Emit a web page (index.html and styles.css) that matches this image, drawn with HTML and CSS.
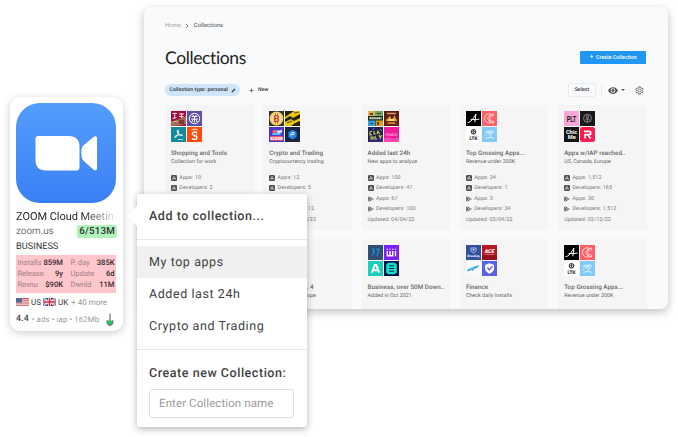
FILE: index.html
```html
<!DOCTYPE html>
<html lang="en">
<head>
<meta charset="utf-8">
<title>Collections</title>
<link rel="stylesheet" href="styles.css">
</head>
<body>
<svg class="defs" width="0" height="0">
  <defs>
    <linearGradient id="zg" x1="0" y1="0" x2="0" y2="1"><stop offset="0" stop-color="#549dfb"/><stop offset="1" stop-color="#3b7ff6"/></linearGradient>
    <linearGradient id="rg" x1="0" y1="0" x2="1" y2="1"><stop offset="0" stop-color="#ff1744"/><stop offset="1" stop-color="#f5245f"/></linearGradient>
    <symbol id="ios" viewBox="0 0 12 12"><rect width="12" height="12" rx="2.5" fill="#505052"/><path d="M6 2.6 3.2 8.9M6 2.6l2.8 6.3M2.2 7.5h7.6" stroke="#f5f5f5" stroke-width="1.1" fill="none"/></symbol>
    <symbol id="play" viewBox="0 0 12 12"><path d="M.5.5 5 6 .5 11.5z" fill="#555"/><path d="M1.800.6 8 4.200 6.200 5.800zM1.800 11.400 8 7.800 6.200 6.200z" fill="#444"/><path d="M8.900 4.500 11.800 6 8.900 7.500 7.400 6z" fill="#555"/></symbol>
    <symbol id="t-redshop" viewBox="0 0 15 15"><rect width="15" height="15" fill="#a50b3e"/><path d="M0 10.5 8 8l7-3v8l-9 2H0z" fill="#a46a55"/><path d="M1.500 2.500h4.500M3.700 1.500v6M1.500 7.500l4-1M8 3h5M8 5.500h4.500M10.500 2v5" stroke="#f3dce0" stroke-width="1"/><path d="M8 9h5v4H8z" fill="#7b3b31"/><path d="M1 12c2-2 4-2 6-1" stroke="#dcb295" fill="none"/></symbol>
    <symbol id="t-purple" viewBox="0 0 15 15"><rect width="15" height="15" fill="#5d51a5"/><circle cx="7.5" cy="7.5" r="5.2" fill="none" stroke="#fff"/><path d="M4.500 5.500h6M4 8h7M6 3.500v2M9 3.500v2M7.500 5.500v6M5 11l1-3M10 11 9 8" stroke="#fff" stroke-width=".9" fill="none"/></symbol>
    <symbol id="t-teal" viewBox="0 0 15 15"><rect width="15" height="15" fill="#138b9c"/><path d="M6.6 3.2c1.5-1 1.2 2.2.1 4.3-1.3 2.6-3.2 3.8-3 2.4.2-1.5 6.3-2.9 7.6-1.9.8 1-2.4 1-4.4-2-1-1.5-.8-2.5-.3-2.8z" fill="none" stroke="#fff" stroke-width="1"/><path d="M7 12.5h5" stroke="#b9e2e5" stroke-width=".9"/></symbol>
    <symbol id="t-orange" viewBox="0 0 15 15"><rect width="15" height="15" fill="#ff4b08"/><path d="M4.5 2.5h6" stroke="#ffc9b0" stroke-width="1.4"/><path d="M10 6C9 4.600 5.300 4.800 5.300 6.800c0 2 4.700 1.300 4.700 3.500 0 2.600-4 2.600-5 1" fill="none" stroke="#fff" stroke-width="1.500"/><path d="M10 7.200 7 9.800" stroke="#fff"/></symbol>
    <symbol id="t-btc" viewBox="0 0 15 15"><rect width="15" height="15" fill="#34332b"/><circle cx="7.5" cy="7.5" r="6.9" fill="#efcf72"/><circle cx="7.5" cy="7.5" r="5" fill="#f5df99"/><text x="7.6" y="10.9" text-anchor="middle" font-size="9.5" font-weight="700" fill="#d1342b">B</text><path d="M6.500 2.500v2M8.500 2.500v2M6.500 10.500v2M8.500 10.500v2" stroke="#d1342b" stroke-width=".8"/></symbol>
    <symbol id="t-yellow" viewBox="0 0 15 15"><rect width="15" height="15" fill="#e9c813"/><path d="M0 0h9L0 6zM0 8l5-3 3 2 7-4v4l-6 3-3-2-6 3zM6 15l4-3 5-2v5z" fill="#24230f"/><path d="M2 12l5-2M9 2l5-1" stroke="#5b5111"/></symbol>
    <symbol id="t-game" viewBox="0 0 15 15"><rect width="15" height="15" fill="#4d36cd"/><circle cx="5.5" cy="5" r="2.2" fill="#ff5b55"/><path d="M7 3.5h4l2-1v3l-4 1z" fill="#d9e5ff"/><path d="M3 8h9l-1-2H4z" fill="#4fc5ff"/><path d="M1.500 9h12v4.700h-12z" fill="#ed5368"/><text x="7.5" y="12.9" text-anchor="middle" font-size="4.2" font-weight="900" fill="#fff">SCENE</text></symbol>
    <symbol id="t-hex" viewBox="0 0 15 15"><rect width="15" height="15" fill="#182441"/><path d="M7.500 2.700 11.700 5v5l-4.200 2.400L3.300 10V5z" fill="#2385e9"/><path d="M6 9.500V6l3-.5v2H6.500" stroke="#fff" stroke-width=".8" fill="none"/></symbol>
    <symbol id="t-four" viewBox="0 0 15 15"><rect width="15" height="15" fill="#3e6b36"/><path d="M0 0h7v6H0z" fill="#dfb05a"/><path d="M7 0h8v5H7z" fill="#69aa5f"/><path d="M0 9h7v6H0z" fill="#2e9ee1"/><path d="M8 9h7v6H8z" fill="#df9a22"/><path d="M2 2h3v2H2zM9 2h4v1H9zM9 11h2v3H9zM2 12h3v1H2z" fill="#5d3722"/><path d="M0 5h15v4.600H0z" fill="#17301f"/><path d="M1.500 7.300h12" stroke="#e9efcf" stroke-width="2.100" stroke-dasharray="1.500 .4"/></symbol>
    <symbol id="t-fire" viewBox="0 0 15 15"><rect width="15" height="15" fill="#5b1d16"/><path d="M3 2.500h9" stroke="#d7a169" stroke-width="1.500"/><path d="M2 10c0-3 3-2 3-5 3 1 1 3 3 3s1-3 3-4c-1 3 2 3 2 6z" fill="#f4a02e"/><path d="M5 8h5v2H5z" fill="#ffe78f"/><path d="M2 10.500h11v3H2z" fill="#84361a"/><path d="M4 12h7" stroke="#f3c45f"/></symbol>
    <symbol id="t-clash" viewBox="0 0 15 15"><rect width="15" height="15" fill="#272053"/><path d="M0 15 6 9l9 2v4z" fill="#34267d"/><path d="M4 4 2 5v3l2-.3M6 4v3h2M9 7l1-3 1.500 3M3 10h2v2H3zM7 9v3h2M11 8l1.500 3 1-3" stroke="#b9cf40" stroke-width="1.200" fill="none"/><path d="M12 2l2 2M5 3l1-2" stroke="#27a5d9"/></symbol>
    <symbol id="t-pink" viewBox="0 0 15 15"><rect width="15" height="15" fill="#ee1b9d"/><path d="M0 12c5-4 9 2 15-2v5H0z" fill="#ff44b3"/><text x="1.5" y="8.8" font-size="3.5" fill="#ffc9eb" textLength="12">POMELO</text></symbol>
    <symbol id="t-a" viewBox="0 0 15 15"><rect width="15" height="15" fill="#000"/><path d="M1.500 11.500c3.200.6 6.500-5.200 8.400-8.500L8.800 11.200M4.500 8.700c3-.6 6 .6 9-.7" fill="none" stroke="#fff" stroke-width="1"/></symbol>
    <symbol id="t-c" viewBox="0 0 15 15"><rect width="15" height="15" fill="#fb6168"/><path d="M11.300 5.200V2.800L10 3.700C5.700 1.500 2.600 4 2.600 7.500s3.100 6 7.400 3.800l1.300.9V9.600M10.500 5.500C8.800 4 6 4.500 6 7.500s2.800 3.500 4.500 2M8 4v7" fill="none" stroke="#ffe5e4" stroke-width=".9"/></symbol>
    <symbol id="t-ltk" viewBox="0 0 15 15"><rect width="15" height="15" fill="#fff"/><circle cx="7.5" cy="4.8" r="2.3" fill="none" stroke="#222" stroke-width="1"/><path d="M5.800 4.800h3.400M7.500 3v3.600" stroke="#333" stroke-width=".8"/><text x="7.5" y="12.9" text-anchor="middle" font-size="4.8" font-weight="700" fill="#111">LTK</text></symbol>
    <symbol id="t-palm" viewBox="0 0 15 15"><rect width="15" height="15" fill="#83caf7"/><path d="M8 11c.5-3 .3-4.500-.5-6M7.500 5C6 3.500 4 4 3.600 6 5 5.300 6 5 7.500 5zM7.500 5c1-2 3.400-1.800 4.200.5C10 5 9 4.800 7.500 5zM7.500 5c-1 .5-1.700 1.500-1.500 3M7.500 5c1.300.5 2.300 1.500 2.200 3M3 11.500c2-1 6-1.500 9 0M2 9.500l2-2" fill="none" stroke="#e5f6ff" stroke-width=".8"/></symbol>
    <symbol id="t-plt" viewBox="0 0 15 15"><rect width="15" height="15" fill="#f7a6d8"/><text x="2.7" y="10.8" font-size="8.4" font-weight="700" fill="#251923" textLength="9.6" lengthAdjust="spacingAndGlyphs">PLT</text></symbol>
    <symbol id="t-badge" viewBox="0 0 15 15"><rect width="15" height="15" fill="#191919"/><circle cx="7.5" cy="7.3" r="4" fill="none" stroke="#aaa" stroke-width=".7"/><circle cx="7.5" cy="5.8" r="1.2" fill="none" stroke="#aaa" stroke-width=".7"/><path d="M5 9.500 7.500 7l2.500 2.500M7.500 7v4" stroke="#aaa" stroke-width=".7" fill="none"/></symbol>
    <symbol id="t-chic" viewBox="0 0 15 15"><rect width="15" height="15" fill="#141414"/><text x="7.5" y="6.9" text-anchor="middle" font-size="5.6" font-weight="700" fill="#fff">Chic</text><text x="7.7" y="12.2" text-anchor="middle" font-size="5.6" font-weight="700" fill="#fff">Me</text></symbol>
    <symbol id="t-r" viewBox="0 0 15 15"><rect width="15" height="15" rx="2.5" fill="url(#rg)"/><path d="M4 4.300h5.100c2.300 0 2.300 3.400 0 3.400H5v3.800M7.800 8l2.800 3.500" fill="none" stroke="#fff" stroke-width="1.700"/></symbol>
    <symbol id="t-wise" viewBox="0 0 15 15"><rect width="15" height="15" fill="#344c7a"/><path d="M4 4.200h2.500L5 6.500l1.700.2-2.700 4M8 4.200h3.300L9 11" fill="none" stroke="#13a8e2" stroke-width="1"/></symbol>
    <symbol id="t-wi" viewBox="0 0 15 15"><rect width="15" height="15" fill="#7b20f2"/><path d="M3.300 6v4.800h5.400V6M6 6v4.600M11.500 6v5.300" fill="none" stroke="#fff" stroke-width="1.400"/><path d="M2.600 4.200h1.400M5.300 4.200h1.400M8 4.200h1.400M10.800 4.200h1.400" stroke="#fff" stroke-width="1.100"/></symbol>
    <symbol id="t-aa" viewBox="0 0 15 15"><rect width="15" height="15" fill="#20cdbd"/><path d="M4 11.600 6.700 3.900h1.600l2.700 7.700M5 9.300h5" fill="none" stroke="#fff" stroke-width="1.900"/></symbol>
    <symbol id="t-list" viewBox="0 0 15 15"><rect width="15" height="15" fill="#07114b"/><path d="M4.200 1.800h6.600l2 2v7.400l-2 2H4.200l-2-2V3.800z" fill="#18dec3"/><path d="M5 4.800h5M5 7.500h5M5 10.200h5" stroke="#07114b" stroke-width=".9"/></symbol>
    <symbol id="t-brand" viewBox="0 0 15 15"><rect width="15" height="15" fill="#3451a0"/><path d="M5 3h5v3L7.500 8 5 6z" fill="none" stroke="#ccd8f6" stroke-width=".8"/><circle cx="7.5" cy="4.8" r="1" fill="#ccd8f6"/><text x="7.5" y="11.8" text-anchor="middle" font-size="3" font-weight="700" fill="#fff">Branding</text></symbol>
    <symbol id="t-ace" viewBox="0 0 15 15"><rect width="15" height="15" fill="#b71920"/><path d="M0 10h15v5H0z" fill="#940f18"/><text x="7.5" y="8.4" text-anchor="middle" font-size="5.2" font-weight="900" font-style="italic" fill="#fff">ACE</text><path d="M3 9.600h9" stroke="#e7a6a8" stroke-width=".6"/></symbol>
    <symbol id="t-bird" viewBox="0 0 15 15"><rect width="15" height="15" fill="#f8f9fb"/><path d="M1 9.500 4 7l3-1 6.500-2-2.500 3-3 1-1 2-1.500-1-2 .5-1.500 1z" fill="#2ba5e7"/><path d="M4 7.400l3.500-.4" stroke="#fff" stroke-width=".5"/></symbol>
    <symbol id="t-shield" viewBox="0 0 15 15"><rect width="15" height="15" fill="#5b61e5"/><path d="M7.500 2.200 12 4v3.600c0 2.400-2 4-4.500 5.200C5 11.600 3 10 3 7.600V4z" fill="#fff"/><path d="M5.500 6.500 7.300 9l3.200-3.700" fill="none" stroke="#5b61e5" stroke-width="1.300"/></symbol>
  </defs>
</svg>

<div class="stage">
  <aside class="app">
    <svg class="app-icon" viewBox="0 0 100 100"><rect width="100" height="100" rx="24" fill="url(#zg)"/><path d="M22 33h31c6.500 0 10.500 4 10.500 10.500v21c0 2-1 3-3 3h-31c-6.500 0-10-4-10-10.500V35.500c0-1.500 1-2.500 2.500-2.500z" fill="#fff"/><path d="m67.300 42.500 10.400-8.700c1.500-1.200 3.300-.7 3.300 1.300v30.300c0 2-1.800 2.500-3.300 1.300l-8.400-7.200c-2.600-2.300-3.800-4-3.800-7.200 0-4-.5-7.500 1.800-9.800z" fill="#fff"/></svg>
    <div class="app-name">ZOOM Cloud Meetin</div>
    <div class="app-dev"><span>zoom.us</span><b class="rank">6/513M</b></div>
    <div class="app-cat">BUSINESS</div>
    <div class="metrics">
      <span>Installs</span><b>859M</b><span class="second">P. day</span><b>385K</b>
      <span>Release</span><b>9y</b><span class="second">Update</span><b>6d</b>
      <span>Revnu</span><b>$90K</b><span class="second">Dwnld</span><b>11M</b>
    </div>
    <div class="geo">
      <svg class="flag" viewBox="0 0 13 8"><rect width="13" height="8" fill="#f3e4e7"/><path d="M0 .6h13M0 2.800h13M0 5h13M0 7.300h13" stroke="#cf5660" stroke-width="1.100"/><rect width="6" height="4.500" fill="#5a6596"/></svg>
      <span class="cc">US</span>
      <svg class="flag" viewBox="0 0 13 8"><rect width="13" height="8" fill="#27408e"/><path d="m0 0 13 8M13 0 0 8" stroke="#fff" stroke-width="1.700"/><path d="m0 0 13 8M13 0 0 8" stroke="#d33a48" stroke-width=".6"/><path d="M6.500 0v8M0 4h13" stroke="#fff" stroke-width="2.800"/><path d="M6.500 0v8M0 4h13" stroke="#d9293c" stroke-width="1.600"/></svg>
      <span class="cc">UK</span><span class="more">+ 40 more</span>
    </div>
    <div class="foot"><b>4.4</b><span>• ads • iap • 162Mb</span>
      <svg viewBox="0 0 8 13"><path d="M1.500 7.500h5v2.300c0 1.400-1 2.200-2.500 2.200s-2.500-.8-2.500-2.200z" fill="#20c568"/><path d="M4 .5v7M1.200 7.300v2.400C1.200 11.400 2.300 12.300 4 12.300s2.800-.9 2.800-2.600V7.300" fill="none" stroke="#42594a" stroke-width="1"/></svg>
    </div>
  </aside>

  <main class="panel">
    <nav class="crumbs"><span>Home</span><svg viewBox="0 0 4 6"><path d="m1 1 2 2-2 2" fill="none" stroke="#555" stroke-width=".8"/></svg><b>Collections</b></nav>
    <header class="head"><h1>Collections</h1><button class="create"><i>+</i>Create Collection</button></header>
    <div class="tools">
      <span class="chip">Collection type: personal<svg viewBox="0 0 6 6"><path d="M.5 5.500 1 4 4.300.7l1 1L2 5z" fill="#34434f"/></svg></span>
      <span class="new"><svg viewBox="0 0 6 6"><path d="M3 .5v5M.5 3h5" stroke="#444" stroke-width=".8"/></svg>New</span>
      <span class="select">Select</span><span class="rule"></span>
      <svg class="eye" viewBox="0 0 10 7"><path d="M0 3.500C2-1 8-1 10 3.500 8 8 2 8 0 3.500z" fill="#555"/><circle cx="5" cy="3.5" r="2.3" fill="#f9fafc"/><circle cx="5" cy="3.5" r="1.4" fill="#555"/></svg>
      <svg class="caret" viewBox="0 0 4 2"><path d="M0 0h4L2 2z" fill="#555"/></svg>
      <svg class="gear" viewBox="0 0 24 24"><path d="M10 2h4l.6 3 2.200 1.300 2.900-1 2 3.500-2.300 2v2.500l2.300 2-2 3.400-2.900-1-2.200 1.300-.6 3h-4l-.6-3-2.200-1.300-2.900 1-2-3.400 2.300-2v-2.500l-2.300-2 2-3.500 2.900 1L9.400 5z" fill="none" stroke="#666" stroke-width="2.400"/><circle cx="12" cy="12" r="3.6" fill="none" stroke="#666" stroke-width="2.2"/></svg>
    </div>
    <section class="grid">
      <article class="card">
        <div class="tiles"><svg><use href="#t-redshop"/></svg><svg><use href="#t-purple"/></svg><svg><use href="#t-teal"/></svg><svg><use href="#t-orange"/></svg></div>
        <h2>Shopping and Tools</h2><p>Collection for work</p>
        <ul><li><svg><use href="#ios"/></svg>Apps: 10</li><li><svg><use href="#ios"/></svg>Developers: 2</li></ul>
      </article>
      <article class="card">
        <div class="tiles"><svg><use href="#t-btc"/></svg><svg><use href="#t-yellow"/></svg><svg><use href="#t-game"/></svg><svg><use href="#t-hex"/></svg></div>
        <h2>Crypto and Trading</h2><p>Cryptocurrency trading</p>
        <ul><li><svg><use href="#ios"/></svg>Apps: 12</li><li><svg><use href="#ios"/></svg>Developers: 5</li><li><svg><use href="#play"/></svg>Apps: 8</li><li><svg><use href="#play"/></svg>Developers: 12</li><li>Updated: 04/04/22</li></ul>
      </article>
      <article class="card">
        <div class="tiles"><svg><use href="#t-four"/></svg><svg><use href="#t-fire"/></svg><svg><use href="#t-clash"/></svg><svg><use href="#t-pink"/></svg></div>
        <h2>Added last 24h</h2><p>New apps to analyze</p>
        <ul><li><svg><use href="#ios"/></svg>Apps: 100</li><li><svg><use href="#ios"/></svg>Developers: 47</li><li><svg><use href="#play"/></svg>Apps: 67</li><li><svg><use href="#play"/></svg>Developers: 100</li><li>Updated: 04/04/22</li></ul>
      </article>
      <article class="card">
        <div class="tiles"><svg><use href="#t-a"/></svg><svg><use href="#t-c"/></svg><svg><use href="#t-ltk"/></svg><svg><use href="#t-palm"/></svg></div>
        <h2>Top Grossing Apps...</h2><p>Revenue under 200K</p>
        <ul><li><svg><use href="#ios"/></svg>Apps: 34</li><li><svg><use href="#ios"/></svg>Developers: 1</li><li><svg><use href="#play"/></svg>Apps: 3</li><li><svg><use href="#play"/></svg>Developers: 34</li><li>Updated: 03/04/22</li></ul>
      </article>
      <article class="card">
        <div class="tiles"><svg><use href="#t-plt"/></svg><svg><use href="#t-badge"/></svg><svg><use href="#t-chic"/></svg><svg><use href="#t-r"/></svg></div>
        <h2>Apps w/IAP reached..</h2><p>US, Canada, Europe</p>
        <ul><li><svg><use href="#ios"/></svg>Apps: 1,512</li><li><svg><use href="#ios"/></svg>Developers: 165</li><li><svg><use href="#play"/></svg>Apps: 30</li><li><svg><use href="#play"/></svg>Developers: 1,512</li><li>Updated: 02/12/22</li></ul>
      </article>
      <article class="card"></article>
      <article class="card">
        <div class="tiles"></div>
        <h2>Collection no. 4</h2><p>US, Canada, Europe</p>
      </article>
      <article class="card">
        <div class="tiles"><svg><use href="#t-wise"/></svg><svg><use href="#t-wi"/></svg><svg><use href="#t-aa"/></svg><svg><use href="#t-list"/></svg></div>
        <h2>Business, over 50M Down..</h2><p>Added in Oct 2021</p>
      </article>
      <article class="card">
        <div class="tiles"><svg><use href="#t-brand"/></svg><svg><use href="#t-ace"/></svg><svg><use href="#t-bird"/></svg><svg><use href="#t-shield"/></svg></div>
        <h2>Finance</h2><p>Check daily Installs</p>
      </article>
      <article class="card">
        <div class="tiles"><svg><use href="#t-a"/></svg><svg><use href="#t-c"/></svg><svg><use href="#t-ltk"/></svg><svg><use href="#t-palm"/></svg></div>
        <h2>Top Grossing Apps...</h2><p>Revenue under 200K</p>
      </article>
    </section>
  </main>

  <div class="popup">
    <h3 class="add">Add to collection...</h3>
    <ul class="menu"><li class="on">My top apps</li><li>Added last 24h</li><li>Crypto and Trading</li></ul>
    <h3 class="make">Create new Collection:</h3>
    <input type="text" placeholder="Enter Collection name">
  </div>
</div>
</body>
</html>
```
FILE: styles.css
```css
* { box-sizing: border-box; margin: 0; padding: 0; }
body { background: #fff; font-family: Roboto, "Liberation Sans", sans-serif; color: #333; overflow: hidden; text-rendering: geometricPrecision; }
.defs { position: absolute; }
.stage { position: relative; display: flex; align-items: flex-start; gap: 21.5px; width: 678px; height: 437px; padding: 7px 10px; }
svg { display: block; flex: none; }
ul { list-style: none; }
button { border: 0; font: inherit; }

/* app summary */
.app { flex: none; width: 112.5px; height: 234px; margin-top: 90px; padding: 6px 6px 0; background: #fff; border-radius: 10px; box-shadow: 0 2px 9px rgba(0,0,0,.2); white-space: nowrap; }
.app-icon { width: 100px; height: 100px; }
.app-name { width: 100px; height: 16px; margin-top: 6px; font-size: 11px; line-height: 16px; letter-spacing: -.05px; color: transparent; background: linear-gradient(90deg, #222 66%, #ddd 97%); -webkit-background-clip: text; background-clip: text; }
.app-dev { display: flex; justify-content: space-between; align-items: center; height: 13px; font-size: 10px; letter-spacing: -.1px; color: #777; }
.rank { height: 13px; padding: 0 1.5px 0 2px; border-radius: 2px; background: #b0f4bd; color: #333; font-size: 9.8px; line-height: 13px; font-weight: 500; letter-spacing: .2px; }
.app-cat { height: 16px; line-height: 18px; font-size: 9.2px; color: #333; }
.metrics { display: grid; grid-template-columns: 25px 20.5px 26px 1fr; grid-auto-rows: 11px; width: 100px; height: 38px; margin-top: .5px; padding: 2px 1.5px; background: #ffc6cc; font-size: 7.6px; line-height: 11px; color: #a08289; }
.metrics span { letter-spacing: -.08px; }
.metrics b { font-weight: 500; text-align: right; color: #37292d; }
.metrics .second { margin-left: 7.5px; }
.geo { display: flex; align-items: center; height: 12px; margin-top: 3.5px; font-size: 8px; }
.flag { width: 13px; height: 8px; }
.cc { margin: 0 2px 0 2px; }
.more { margin-left: 1px; color: #999; }
.foot { display: flex; align-items: center; height: 13px; margin-top: 4.5px; font-size: 7.8px; letter-spacing: .12px; color: #999; }
.foot b { margin-right: 3px; font-size: 8.8px; font-weight: 500; color: #444; }
.foot svg { width: 8px; height: 13px; margin-left: auto; margin-right: 3px; }

/* collections window */
.panel { flex: none; width: 524px; height: 302px; padding: 14px 0 0 21px; background: #f9fafc; border-radius: 7px; box-shadow: 0 3px 10px rgba(0,0,0,.25); overflow: hidden; }
.crumbs { display: flex; align-items: center; height: 10px; font-size: 5.9px; color: #999; }
.crumbs svg { width: 4px; height: 6px; margin: 0 5px 0 4px; }
.crumbs b { font-weight: 400; color: #444; }
.head { display: flex; align-items: center; justify-content: space-between; height: 42px; margin-top: 5px; padding-right: 22px; }
h1 { font-family: Lato, Roboto, sans-serif; font-size: 17.5px; font-weight: 400; color: #222; letter-spacing: -.38px; }
.create { display: flex; align-items: center; width: 66px; height: 13px; padding-left: 7px; border-radius: 1px; background: #2196f3; color: #fff; font-size: 5.2px; font-weight: 500; letter-spacing: .05px; }
.create i { width: 9px; font-style: normal; font-size: 7px; font-weight: 400; }
.tools { display: flex; align-items: center; height: 14px; margin-top: 5px; font-size: 5.2px; font-weight: 500; color: #333; letter-spacing: .04px; }
.chip { display: flex; align-items: center; width: 75px; height: 12px; padding-left: 4.5px; border-radius: 6px; background: #cfe5fa; white-space: nowrap; }
.chip svg { width: 5px; height: 5px; margin-left: 3px; }
.new { display: flex; align-items: center; margin-left: 9px; }
.new svg { width: 5px; height: 5px; margin-right: 4px; }
.select { width: 28px; height: 14px; margin-left: auto; border: 1px solid #ebecee; border-radius: 2px; line-height: 12px; text-align: center; background: #fafbfc; }
.rule { width: 1px; height: 10px; margin: 0 6px 0 5px; background: #e5e6e8; }
.eye { width: 10px; height: 7px; }
.caret { width: 4px; height: 2px; margin: 0 10px 0 3px; }
.gear { width: 9px; height: 9px; margin-right: 24px; }
.grid { display: grid; grid-template-columns: repeat(5, 88.5px); grid-template-rows: 125px 125px; gap: 9.3px 9.8px; margin-top: 7.5px; }
.card { padding: 6px 0 0 6px; background: #f5f5f5; white-space: nowrap; overflow: hidden; }
.tiles { display: grid; grid-template-columns: 15px 15px; grid-template-rows: 15px 15px; gap: 1px; height: 31px; }
.tiles svg { width: 15px; height: 15px; }
h2 { height: 10px; margin-top: 6px; font-size: 6.2px; line-height: 10px; font-weight: 500; letter-spacing: .08px; color: #666; }
.card p { height: 9px; font-size: 5.4px; line-height: 9px; color: #666; }
.card ul { margin-top: 5.8px; }
.card li { display: flex; align-items: center; height: 10.5px; font-size: 5.4px; letter-spacing: .08px; color: #777; }
.card li svg { width: 6px; height: 6px; margin-right: 2.3px; }

/* add-to-collection popup */
.popup { position: absolute; left: 136.5px; top: 194px; width: 170.5px; height: 233px; background: #fff; border-radius: 3px; box-shadow: 0 2px 7px rgba(0,0,0,.3); color: #424242; white-space: nowrap; }
.popup::before { content: ""; position: absolute; left: -9px; top: 12px; border: 10px solid transparent; border-left: 0; border-right: 9px solid #fff; }
.popup h3 { font-size: 12.5px; font-weight: 500; letter-spacing: .54px; padding-left: 12.5px; }
.add { height: 46px; line-height: 45px; border-bottom: 1px solid #e8e8e8; }
.menu { height: 110px; padding-top: 6px; border-bottom: 1px solid #e8e8e8; font-size: 12.5px; letter-spacing: .57px; }
.menu li { height: 32px; line-height: 33px; padding-left: 12.5px; }
.menu .on { background: #f0f0f0; }
.make { height: 39px; line-height: 47px; }
input { display: block; width: 145px; height: 28.5px; margin-left: 12.5px; padding-left: 9px; border: 1px solid #ddd; border-radius: 3px; font: 11.5px Roboto, sans-serif; letter-spacing: .1px; background: #fff; text-rendering: inherit; }
input::placeholder { color: #9b9b9b; opacity: 1; }
```
